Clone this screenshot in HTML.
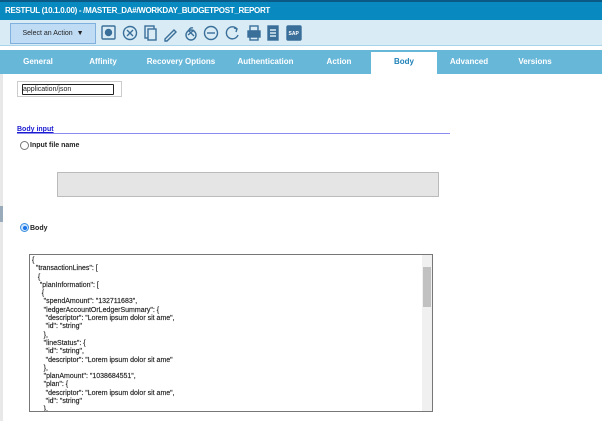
<!DOCTYPE html>
<html><head><style>
body{margin:0;width:602px;height:421px;overflow:hidden;background:#fff;font-family:"Liberation Sans",Arial,sans-serif;position:relative}
.a{position:absolute}
.title{left:0;top:0;width:602px;height:20px;background:#0889c0;border-top:2px solid #0a5a85;box-sizing:border-box;color:#fff;font-size:8px;font-weight:bold;line-height:18px;padding-left:5px;letter-spacing:-0.3px}
.tb{left:0;top:20px;width:602px;height:25px;background:#d9ecf5;border-bottom:1px solid #a8d3e8}
.sel{left:10px;top:23px;width:84px;height:19px;background:#c0dcf5;border:1px solid #7fb0de;font-size:7px;color:#222;line-height:19px;text-align:center}
.tabs{left:0;top:50px;width:602px;height:24px;background:#67b7d9}
.tab{position:absolute;top:0;height:24px;line-height:24px;color:#fff;font-size:8px;font-weight:bold;text-align:center}
.t{font-size:7px;color:#222}
pre{margin:0;font-family:"Liberation Sans",Arial,sans-serif;font-size:7px;line-height:8.3px;color:#222;-webkit-text-stroke:0.15px #222}
</style></head><body>
<div class="a title">RESTFUL (10.1.0.00) - /MASTER_DA#/WORKDAY_BUDGETPOST_REPORT</div>
<div class="a tb"></div>
<div class="a sel">Select an Action &nbsp;▼</div>
<svg class="a" style="left:100px;top:24px" width="205" height="18" viewBox="0 0 205 18" fill="none" stroke="#3a6f9a" stroke-width="1.4">
<rect x="2" y="2" width="13" height="13" rx="1"/><circle cx="8.5" cy="8.5" r="3" fill="#3a6f9a"/>
<circle cx="30" cy="9" r="6.5"/><path d="M27 6l6 6M33 6l-6 6"/>
<rect x="45" y="2" width="9" height="12"/><rect x="48" y="5" width="8" height="11" fill="#d9ecf5"/>
<path d="M65 15l9-9 2 2-9 9h-2z"/>
<circle cx="91" cy="11" r="5"/><path d="M88 11l6-5M88 6l6 6" /><path d="M89 6a3 3 0 0 1 4-2"/>
<circle cx="111" cy="9" r="6.5"/><path d="M107 9h8"/>
<path d="M137 5a6 6 0 1 0 1 6"/><path d="M134 4l3 1-1 3"/>
<rect x="148" y="7" width="12" height="6" fill="#3a6f9a"/><rect x="150" y="2" width="8" height="5"/><rect x="150" y="12" width="8" height="4"/>
<rect x="168" y="2" width="10" height="14" fill="#3a6f9a"/><path d="M170 6h6M170 9h6M170 12h6" stroke="#d9ecf5"/>
<rect x="187" y="2" width="14" height="14" rx="1" fill="#3a6f9a"/><text x="188.5" y="11" font-size="5" fill="#fff" stroke="none" font-family="Liberation Sans" font-weight="bold">SAP</text>
</svg>
<div class="a tabs">
<div class="tab" style="left:8px;width:60px">General</div>
<div class="tab" style="left:73px;width:60px">Affinity</div>
<div class="tab" style="left:131px;width:100px">Recovery Options</div>
<div class="tab" style="left:233px;width:65px">Authentication</div>
<div class="tab" style="left:310px;width:58px">Action</div>
<div class="tab" style="left:371px;width:66px;background:#fff;color:#1f82b8;top:2px;height:22px;line-height:20px">Body</div>
<div class="tab" style="left:439px;width:60px">Advanced</div>
<div class="tab" style="left:505px;width:60px">Versions</div>
</div>
<div class="a" style="left:0;top:74px;width:3px;height:347px;background:#e8e8e8"></div>
<div class="a" style="left:0;top:206px;width:3px;height:16px;background:#9ab"></div>
<div class="a" style="left:17px;top:81px;width:105px;height:16px;border:1px solid #ccc;box-sizing:border-box"></div>
<div class="a t" style="left:22px;top:84px;width:90px;height:9px;border:1px solid #222;border-radius:1px;line-height:9px;font-size:7px">application/json</div>
<div class="a" style="left:17px;top:126px;font-size:7px;font-weight:bold;color:#1a1ad0;text-decoration:underline">Body input</div>
<div class="a" style="left:17px;top:133px;width:433px;height:1px;background:#8c8cf0"></div>
<div class="a" style="left:20px;top:141px;width:7px;height:7px;border:1px solid #777;border-radius:50%"></div>
<div class="a t" style="left:30px;top:142px;font-weight:bold">Input file name</div>
<div class="a" style="left:57px;top:172px;width:382px;height:25px;background:#e5e5e5;border:1px solid #bbb;box-sizing:border-box"></div>
<div class="a" style="left:20px;top:223px;width:7px;height:7px;border:1px solid #3b8fe0;border-radius:50%;background:#cde4fb"></div>
<div class="a" style="left:22.5px;top:225.5px;width:4px;height:4px;border-radius:50%;background:#1a73e8"></div>
<div class="a t" style="left:30px;top:225px;font-weight:bold">Body</div>
<div class="a" style="left:29px;top:254px;width:404px;height:158px;border:1px solid #777;box-sizing:border-box;overflow:hidden;padding:2px 0 0 2px">
<pre>{
  "transactionLines": [
   {
    "planInformation": [
     {
      "spendAmount": "132711683",
      "ledgerAccountOrLedgerSummary": {
       "descriptor": "Lorem ipsum dolor sit ame",
       "id": "string"
      },
      "lineStatus": {
       "id": "string",
       "descriptor": "Lorem ipsum dolor sit ame"
      },
      "planAmount": "1038684551",
      "plan": {
       "descriptor": "Lorem ipsum dolor sit ame",
       "id": "string"
      },
      "currency": {
       "id": "string"</pre>
<div class="a" style="right:0;top:0;width:10px;height:156px;background:#f0f0f0"></div>
<div class="a" style="right:1px;top:12px;width:8px;height:40px;background:#c1c1c1"></div>
</div>
</body></html>
